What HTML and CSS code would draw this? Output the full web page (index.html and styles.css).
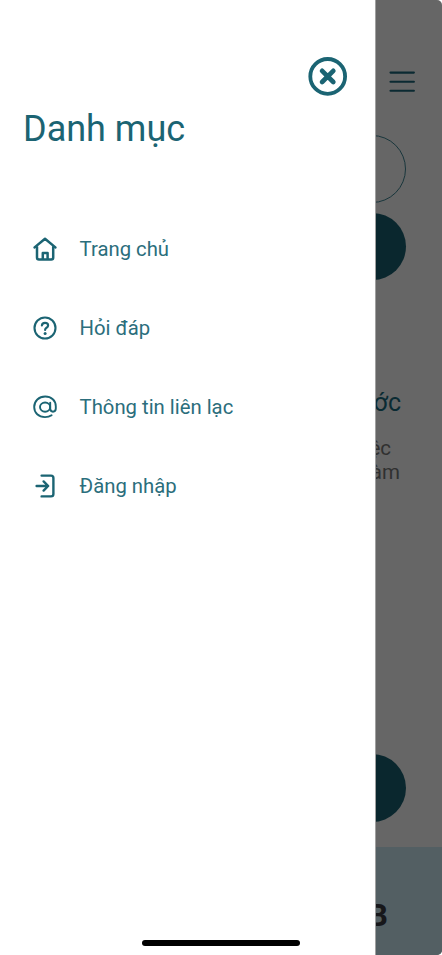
FILE: index.html
```html
<!DOCTYPE html>
<html lang="vi">
<head>
<meta charset="utf-8">
<meta name="viewport" content="width=device-width, initial-scale=1">
<title>Danh mục</title>
<link rel="stylesheet" href="styles.css">
</head>
<body>
<div class="screen">
  <main class="page">
    <header class="page-header">
      <svg class="burger" viewBox="0 0 28 24"><path d="M2.5 2.6H25.9M2.5 11.7H25.9M2.5 20.8H25.9"/></svg>
    </header>
    <div class="pill pill-outline"></div>
    <div class="pill pill-solid"></div>
    <section class="info">
      <h2 class="info-title">ước</h2>
      <p class="info-line info-line-short">iệc</p>
      <p class="info-line">làm</p>
    </section>
    <div class="pill pill-solid pill-last"></div>
    <footer class="page-footer"><span class="footer-text">B</span></footer>
  </main>
  <aside class="drawer">
    <button class="close" aria-label="Đóng">
      <svg viewBox="0 0 40 40"><circle cx="19.7" cy="20.4" r="17.4" stroke-width="3.8"/><path d="M14.1 14.8L25.3 26M25.3 14.8L14.1 26" stroke-width="4.7"/></svg>
    </button>
    <h1 class="drawer-title">Danh mục</h1>
    <nav class="menu">
      <a class="item">
        <svg class="icon" viewBox="0 0 24 24"><path d="M1.6 10.4L12 1.8L22.4 10.4M4 9.5V20.4Q4 22.4 6 22.4H18.2Q20.2 22.4 20.2 20.4V9.5M9.8 22V16H14.6V22" stroke-width="2.5"/></svg>
        <span>Trang chủ</span>
      </a>
      <a class="item">
        <svg class="icon" viewBox="0 0 24 24"><circle cx="12" cy="12" r="10.5" stroke-width="2.1"/><path d="M8.9 9.5Q9.1 6.9 12 6.9Q15.1 6.9 15.1 9.4Q15.1 10.8 13.5 11.8Q12.1 12.7 12.1 14" stroke-width="2.2"/><circle class="dot" cx="12.1" cy="17.4" r="1.5"/></svg>
        <span>Hỏi đáp</span>
      </a>
      <a class="item">
        <svg class="icon" viewBox="0 0 24 24"><path d="M18.6 20.2C16.6 21.6 14.6 22.1 12 22.1C5.6 22.1 1.2 18 1.2 12S5.9 1.5 12.2 1.5C18.3 1.5 22.8 5.5 22.8 11.2V13.6C22.8 15.6 21.6 16.7 20 16.7C18.2 16.7 17.2 15.6 17.2 13.6V7.6" stroke-width="1.9"/><ellipse cx="12.1" cy="12.1" rx="5.1" ry="4.6" stroke-width="1.9"/></svg>
        <span>Thông tin liên lạc</span>
      </a>
      <a class="item">
        <svg class="icon" viewBox="0 0 24 24"><path d="M8.6 1.6H18Q20.4 1.6 20.4 4V20Q20.4 22.4 18 22.4H8.6M3.6 12H15M10.6 7.4L15.2 12L10.6 16.6" stroke-width="2.4"/></svg>
        <span>Đăng nhập</span>
      </a>
    </nav>
  </aside>
  <div class="home-bar"></div>
</div>
</body>
</html>
```
FILE: styles.css
```css
* { box-sizing: border-box; margin: 0; padding: 0; }
body { background: #fff; font-family: Roboto, "Liberation Sans", sans-serif; }
.screen { position: relative; width: 442px; height: 955px; overflow: hidden; border-radius: 0 5px 5px 0; }
svg { display: block; fill: none; stroke: currentColor; stroke-linecap: round; stroke-linejoin: round; }

.page { height: 100%; background: #666; display: flex; flex-direction: column; align-items: flex-end; }
.page-header { padding: 70px 26px 0 0; height: 135px; color: #0b2a32; }
.burger { width: 28px; height: 24px; stroke-width: 2.1; }
.pill { width: 370px; height: 67.5px; margin-right: 36.5px; border-radius: 34px; flex: none; }
.pill-outline { border: 1.5px solid #19363c; }
.pill-solid { background: #0a272e; margin-top: 10px; }
.info { margin: 108px 42px 0 0; height: 366px; text-align: right; }
.info-title { font-size: 25px; line-height: 30px; font-weight: 400; color: #0a2b33; margin: 0 -1px 18px 0; }
.info-line { font-size: 20.5px; line-height: 24px; color: #303030; }
.info-line-short { padding-right: 9px; }
.pill-last { margin-top: 0; }
.page-footer { width: 100%; flex: 1; margin-top: 25px; padding: 49px 54px 0 0; background: #535f63; text-align: right; }
.footer-text { font-size: 32px; line-height: 38px; font-weight: 700; color: #17171a; }

.drawer { position: absolute; inset: 0 auto 0 0; width: 376px; background: #fff; border-right: 1px solid #a0a0a0; color: #1b6473; display: flex; flex-direction: column; }
.close { align-self: flex-end; width: 40px; height: 40px; margin: 56px 27px 0 0; border: 0; background: none; color: inherit; flex: none; }
.drawer-title { margin: 12px 0 0 23px; font-size: 36px; line-height: 42px; font-weight: 400; letter-spacing: 0; }
.menu { margin-top: 59px; padding-left: 33.4px; }
.item { display: flex; align-items: center; height: 79.2px; gap: 22.2px; font-size: 20.3px; color: #2b6e7c; }
.icon { width: 24px; height: 24px; color: #1b6473; flex: none; }
.icon .dot { fill: currentColor; stroke: none; }
.home-bar { position: absolute; left: 142px; top: 940px; width: 158px; height: 6px; border-radius: 3px; background: #000; }
```
